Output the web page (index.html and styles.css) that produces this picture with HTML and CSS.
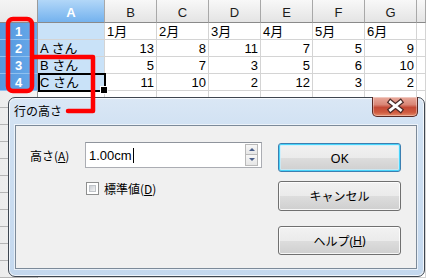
FILE: index.html
```html
<!DOCTYPE html>
<html lang="ja">
<head>
<meta charset="utf-8">
<title>行の高さ</title>
<link rel="stylesheet" href="styles.css">
</head>
<body>
<div class="sheet">
  <div class="corner"></div><div class="ch sel">A</div><div class="ch">B</div><div class="ch">C</div><div class="ch">D</div><div class="ch">E</div><div class="ch">F</div><div class="ch">G</div><div class="ch"></div>
  <div class="rh sel">1</div><div class="c a"></div><div class="c">1月</div><div class="c">2月</div><div class="c">3月</div><div class="c">4月</div><div class="c">5月</div><div class="c">6月</div><div class="c"></div>
  <div class="rh sel">2</div><div class="c a">A さん</div><div class="c num">13</div><div class="c num">8</div><div class="c num">11</div><div class="c num">7</div><div class="c num">5</div><div class="c num">9</div><div class="c"></div>
  <div class="rh sel">3</div><div class="c a">B さん</div><div class="c num">5</div><div class="c num">7</div><div class="c num">3</div><div class="c num">5</div><div class="c num">6</div><div class="c num">10</div><div class="c"></div>
  <div class="rh sel">4</div><div class="c a cur">C さん</div><div class="c num">11</div><div class="c num">10</div><div class="c num">2</div><div class="c num">12</div><div class="c num">3</div><div class="c num">2</div><div class="c"></div>
  <div class="rh"></div><div class="c"></div><div class="c"></div><div class="c"></div><div class="c"></div><div class="c"></div><div class="c"></div><div class="c"></div><div class="c"></div>
  <div class="rh"></div><div class="c"></div><div class="c"></div><div class="c"></div><div class="c"></div><div class="c"></div><div class="c"></div><div class="c"></div><div class="c"></div>
  <div class="rh"></div><div class="c"></div><div class="c"></div><div class="c"></div><div class="c"></div><div class="c"></div><div class="c"></div><div class="c"></div><div class="c"></div>
  <div class="rh"></div><div class="c"></div><div class="c"></div><div class="c"></div><div class="c"></div><div class="c"></div><div class="c"></div><div class="c"></div><div class="c"></div>
  <div class="rh"></div><div class="c"></div><div class="c"></div><div class="c"></div><div class="c"></div><div class="c"></div><div class="c"></div><div class="c"></div><div class="c"></div>
  <div class="rh"></div><div class="c"></div><div class="c"></div><div class="c"></div><div class="c"></div><div class="c"></div><div class="c"></div><div class="c"></div><div class="c"></div>
  <div class="rh"></div><div class="c"></div><div class="c"></div><div class="c"></div><div class="c"></div><div class="c"></div><div class="c"></div><div class="c"></div><div class="c"></div>
  <div class="rh"></div><div class="c"></div><div class="c"></div><div class="c"></div><div class="c"></div><div class="c"></div><div class="c"></div><div class="c"></div><div class="c"></div>
  <div class="rh"></div><div class="c"></div><div class="c"></div><div class="c"></div><div class="c"></div><div class="c"></div><div class="c"></div><div class="c"></div><div class="c"></div>
  <div class="rh"></div><div class="c"></div><div class="c"></div><div class="c"></div><div class="c"></div><div class="c"></div><div class="c"></div><div class="c"></div><div class="c"></div>
  <div class="rh"></div><div class="c"></div><div class="c"></div><div class="c"></div><div class="c"></div><div class="c"></div><div class="c"></div><div class="c"></div><div class="c"></div>
</div>

<div class="dialog">
  <div class="titlebar">
    <span class="title">行の高さ</span>
    <div class="close">
      <svg width="44" height="18" viewBox="0 0 44 18">
        <path d="M17.5 5 L27.5 13 M27.5 5 L17.5 13" stroke="#4b2b28" stroke-width="5.2" stroke-linecap="square" fill="none"/>
        <path d="M17.5 5 L27.5 13 M27.5 5 L17.5 13" stroke="#ffffff" stroke-width="2.8" stroke-linecap="square" fill="none"/>
      </svg>
    </div>
  </div>
  <div class="client">
    <div class="form">
      <div class="row">
        <span class="lbl">高さ(<u>A</u>)</span>
        <div class="field">
          <span class="val">1.00cm</span><span class="caret"></span>
          <div class="spin"><span class="sp up"></span><span class="sp down"></span></div>
        </div>
      </div>
      <div class="chk"><span class="box"></span><span class="chklbl">標準値(<u>D</u>)</span></div>
    </div>
    <div class="btns">
      <div class="btn def">OK</div>
      <div class="btn b2">キャンセル</div>
      <div class="btn b3">ヘルプ(<u>H</u>)</div>
    </div>
  </div>
</div>

<svg class="annot" width="426" height="278" viewBox="0 0 426 278">
  <rect x="8" y="19" width="24" height="72" rx="5" ry="5" fill="none" stroke="#ff0000" stroke-width="4.5"/>
  <path d="M34 57 L93 57 L93 111 L68 111" fill="none" stroke="#ff0000" stroke-width="4.5" stroke-linejoin="round" stroke-linecap="round"/>
</svg>
</body>
</html>
```

FILE: styles.css
```css
html, body {
  margin: 0;
  padding: 0;
}
body {
  width: 426px;
  height: 278px;
  overflow: hidden;
  position: relative;
  background: #ffffff;
  font-family: "Liberation Sans", "Noto Sans CJK JP", sans-serif;
  font-size: 13px;
  color: #000;
}

/* spreadsheet */
.sheet {
  display: grid;
  grid-template-columns: 38px 67px repeat(6, 52px) 9px;
  grid-template-rows: 23px;
  grid-auto-rows: 17px;
}
.sheet > div {
  box-sizing: border-box;
  white-space: nowrap;
  overflow: hidden;
}
.corner {
  background: linear-gradient(#f4f4f4, #e8e8e8);
  border-right: 1px solid #9a9a9a;
  border-bottom: 1px solid #8a8a8a;
}
.ch {
  background: linear-gradient(#f8f8f8, #e4e4e4);
  border-right: 1px solid #a8a8a8;
  border-bottom: 1px solid #8a8a8a;
  text-align: center;
  line-height: 25px;
  color: #1c1c1c;
}
.ch.sel {
  background: linear-gradient(#b2d7f8, #74b2ee);
  color: #ffffff;
  font-weight: bold;
}
.rh {
  background: linear-gradient(90deg, #ececec, #f4f4f4);
  border-right: 1px solid #9a9a9a;
  border-bottom: 1px solid #b5b5b5;
  text-align: center;
  line-height: 17px;
  color: #333;
}
.rh.sel {
  background: linear-gradient(90deg, #5598de, #67a9ea);
  border-bottom-color: #8fc1f0;
  color: #ffffff;
  font-weight: bold;
}
.c {
  border-right: 1px solid #d4d4d4;
  border-bottom: 1px solid #d4d4d4;
  line-height: 17px;
  padding: 0 2px;
}
.num { text-align: right; }
.a { background: #c9e2f8; }
.cur {
  position: relative;
  overflow: visible !important;
}
.cur::after {
  content: "";
  position: absolute;
  left: 0;
  top: -1px;
  right: -2px;
  bottom: -2px;
  border: 2px solid #000;
}
.cur::before {
  content: "";
  position: absolute;
  right: -4px;
  bottom: -4px;
  width: 6px;
  height: 6px;
  background: #000;
  border: 1px solid #fff;
  z-index: 1;
}

/* red annotation */
.annot {
  position: absolute;
  left: 0;
  top: 0;
  z-index: 5;
  pointer-events: none;
}

/* dialog window */
.dialog {
  position: absolute;
  left: 8px;
  top: 97px;
  width: 417px;
  height: 180px;
  box-sizing: border-box;
  border: 1px solid #3e4650;
  border-radius: 7px;
  background: linear-gradient(180deg, #dae7f5 0%, #cfe0f2 20%, #c4d8ee 100%);
  box-shadow: inset 0 0 0 1px rgba(255,255,255,0.75);
  padding: 0 7px 7px 6px;
  display: flex;
  flex-direction: column;
  z-index: 3;
  font-family: "Noto Sans", "Noto Sans CJK JP", sans-serif;
  font-size: 12px;
}
.titlebar {
  height: 27px;
  position: relative;
  flex: none;
}
.title {
  display: block;
  margin-left: -1px;
  padding-top: 5px;
  line-height: 16px;
  font-family: "Noto Sans CJK JP", sans-serif;
  font-size: 12px;
  color: #000;
}
.close {
  position: absolute;
  top: -1px;
  right: -1px;
  width: 46px;
  height: 20px;
  box-sizing: border-box;
  border: 1px solid #5a2a24;
  border-top: none;
  border-radius: 0 0 5px 5px;
  background: linear-gradient(180deg, #e9ab9d 0%, #d98676 40%, #c44a36 55%, #cf5a3e 80%, #e38b6a 100%);
  box-shadow: inset 0 0 0 1px rgba(255,255,255,0.35);
}
.close svg { display: block; }
.client {
  flex: 1;
  border: 1px solid #7c8a99;
  background: #f0f0f0;
  display: flex;
  padding: 16px 15px 0 14px;
  box-shadow: 0 0 0 1px rgba(255,255,255,0.6);
}
.form {
  width: 232px;
}
.row {
  display: flex;
  align-items: center;
  height: 26px;
}
.lbl {
  width: 55px;
  font-family: "Noto Sans CJK JP", sans-serif;
  font-size: 12px;
  color: #000;
}
.field {
  width: 177px;
  height: 26px;
  box-sizing: border-box;
  border: 1px solid #abadb3;
  border-top-color: #8f949c;
  background: #fff;
  display: flex;
  align-items: center;
  padding-left: 3px;
}
.val {
  font-family: "Liberation Sans", sans-serif;
  font-size: 13px;
  color: #000;
}
.caret {
  width: 1px;
  height: 15px;
  background: #000;
  margin-left: 1px;
}
.spin {
  margin-left: auto;
  margin-right: 3px;
  display: flex;
  flex-direction: column;
}
.sp {
  width: 13px;
  height: 11px;
  box-sizing: border-box;
  border: 1px solid #b9b9b9;
  background: linear-gradient(#f7f7f7, #e6e6e6);
  position: relative;
}
.sp.down { border-top: none; }
.sp::after {
  content: "";
  position: absolute;
  left: 3px;
  top: 3px;
  border-left: 3px solid transparent;
  border-right: 3px solid transparent;
}
.up::after { border-bottom: 3px solid #4a5f8a; }
.down::after { border-top: 3px solid #4a5f8a; top: 3px; }
.chk {
  display: flex;
  align-items: center;
  margin-top: 14px;
  padding-left: 56px;
  height: 13px;
}
.box {
  width: 13px;
  height: 13px;
  box-sizing: border-box;
  border: 1px solid #8e8f8f;
  background: #fff;
  position: relative;
}
.box::after {
  content: "";
  position: absolute;
  left: 2px;
  top: 2px;
  width: 7px;
  height: 7px;
  background: linear-gradient(135deg, #cbcfd5, #f4f4f4);
  border: 1px solid #c0c4c9;
  box-sizing: border-box;
}
.chklbl {
  margin-left: 5px;
  font-family: "Noto Sans CJK JP", sans-serif;
  font-size: 12px;
  color: #000;
}
.btns {
  margin-left: 16px;
  width: 123px;
  padding-top: 1px;
  display: flex;
  flex-direction: column;
}
.btn {
  height: 29px;
  box-sizing: border-box;
  border: 1px solid #707070;
  border-radius: 3px;
  background: linear-gradient(180deg, #f2f2f2 0%, #ebebeb 50%, #dddddd 51%, #cfcfcf 100%);
  box-shadow: inset 0 0 0 1px rgba(255,255,255,0.8);
  display: flex;
  align-items: center;
  justify-content: center;
  font-family: "Noto Sans", "Noto Sans CJK JP", sans-serif;
  font-size: 12px;
  color: #000;
}
.btn.def {
  border-color: #3c7fb1;
  box-shadow: inset 0 0 0 1px #48d4fa, inset 0 0 0 2px rgba(200,240,255,0.7);
  font-size: 13px;
}
.b2 {
  margin-top: 9px;
  height: 30px;
}
.b3 {
  margin-top: 15px;
}
```
